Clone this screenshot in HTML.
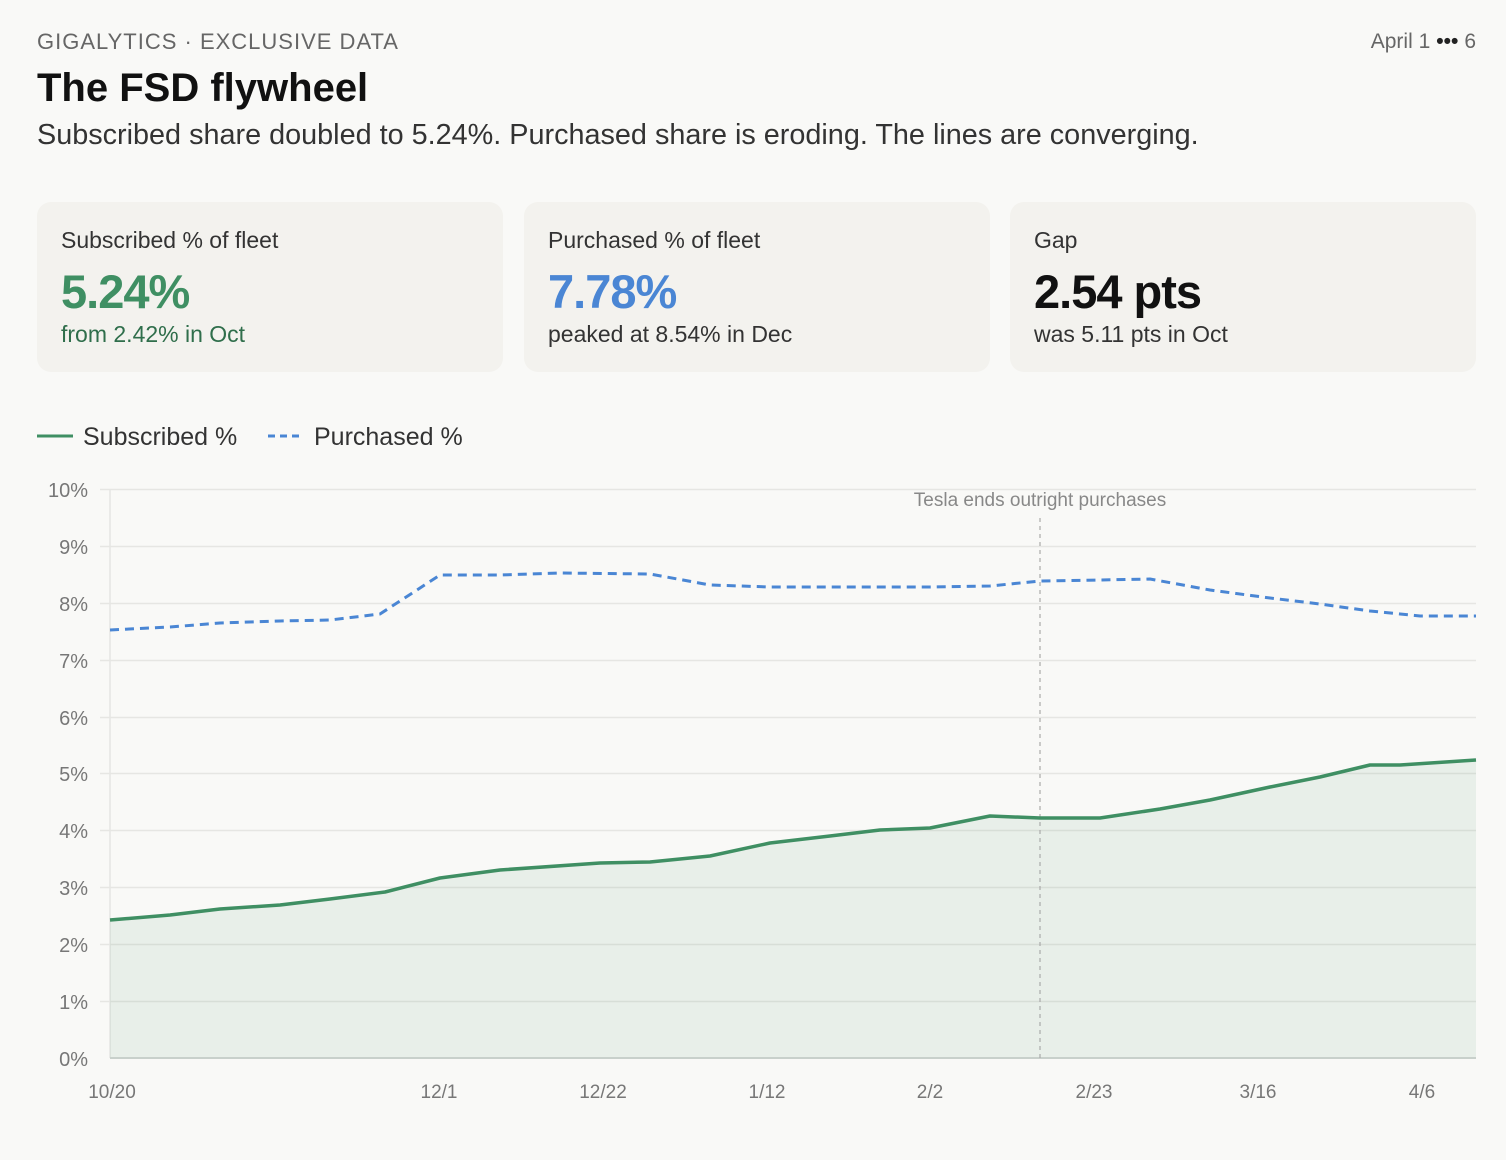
<!DOCTYPE html>
<html><head><meta charset="utf-8"><style>
body{margin:0;width:1506px;height:1160px;background:#f9f9f7;font-family:"Liberation Sans",sans-serif;position:relative;overflow:hidden}
.a{position:absolute;white-space:nowrap}
.card{position:absolute;top:202px;width:466px;height:170px;background:#f3f2ee;border-radius:14px}
.card .l{position:absolute;left:24px;top:25px;font-size:23px;color:#333}
.card .v{position:absolute;left:24px;top:62px;font-size:47px;font-weight:bold;letter-spacing:-1px}
.card .s{position:absolute;left:24px;top:119px;font-size:23px;color:#333}
</style></head><body>
<div class="a" style="left:37px;top:29px;font-size:22px;letter-spacing:1px;color:#666">GIGALYTICS · EXCLUSIVE DATA</div>
<div class="a" style="right:30px;top:30px;font-size:21px;color:#666">April 1<span style="color:#222;font-weight:bold;margin:0 6px">•••</span>6</div>
<div class="a" style="left:37px;top:66px;font-size:40px;font-weight:bold;color:#111">The FSD flywheel</div>
<div class="a" style="left:37px;top:119px;font-size:28.8px;color:#333">Subscribed share doubled to 5.24%. Purchased share is eroding. The lines are converging.</div>
<div class="card" style="left:37px"><div class="l">Subscribed % of fleet</div><div class="v" style="color:#3f8f63">5.24%</div><div class="s" style="color:#2f6e4b">from 2.42% in Oct</div></div>
<div class="card" style="left:524px"><div class="l">Purchased % of fleet</div><div class="v" style="color:#4a86d4">7.78%</div><div class="s">peaked at 8.54% in Dec</div></div>
<div class="card" style="left:1010px"><div class="l">Gap</div><div class="v" style="color:#111">2.54 pts</div><div class="s">was 5.11 pts in Oct</div></div>
<svg class="a" style="left:0;top:0" width="1506" height="1160">
<line x1="37" y1="436" x2="73" y2="436" stroke="#3f8f63" stroke-width="3"/>
<text x="83" y="445" font-size="25" fill="#333" font-family="Liberation Sans">Subscribed %</text>
<line x1="268" y1="436" x2="304" y2="436" stroke="#4a86d4" stroke-width="3" stroke-dasharray="7,5"/>
<text x="314" y="445" font-size="25" fill="#333" font-family="Liberation Sans">Purchased %</text>
<g stroke="#e6e6e3" stroke-width="1.5">
<line x1="100" y1="489.5" x2="1476" y2="489.5"/><line x1="100" y1="546.5" x2="1476" y2="546.5"/><line x1="100" y1="603.5" x2="1476" y2="603.5"/><line x1="100" y1="660.5" x2="1476" y2="660.5"/><line x1="100" y1="717.5" x2="1476" y2="717.5"/><line x1="100" y1="773.5" x2="1476" y2="773.5"/><line x1="100" y1="830.5" x2="1476" y2="830.5"/><line x1="100" y1="887.5" x2="1476" y2="887.5"/><line x1="100" y1="944.5" x2="1476" y2="944.5"/><line x1="100" y1="1001.5" x2="1476" y2="1001.5"/>
<line x1="110" y1="489" x2="110" y2="1058"/>
</g>
<g font-size="20" fill="#777" text-anchor="end" font-family="Liberation Sans">
<text x="88" y="497">10%</text><text x="88" y="554">9%</text><text x="88" y="611">8%</text><text x="88" y="668">7%</text><text x="88" y="725">6%</text><text x="88" y="781">5%</text><text x="88" y="838">4%</text><text x="88" y="895">3%</text><text x="88" y="952">2%</text><text x="88" y="1009">1%</text><text x="88" y="1066">0%</text>
</g>
<g font-size="19" fill="#777" text-anchor="middle" font-family="Liberation Sans">
<text x="112" y="1098">10/20</text><text x="439" y="1098">12/1</text><text x="603" y="1098">12/22</text><text x="767" y="1098">1/12</text><text x="930" y="1098">2/2</text><text x="1094" y="1098">2/23</text><text x="1258" y="1098">3/16</text><text x="1422" y="1098">4/6</text>
</g>
<polygon fill="#3f8f63" fill-opacity="0.09" points="110,1058 110,920 170,915 220,909 280,905 330,899 385,892 440,878 500,870 600,863 650,862 710,856 770,843 830,836 880,830 930,828 990,816 1040,818 1100,818 1160,809 1210,800 1270,787 1320,777 1370,765 1400,765 1476,760 1476,1058"/>
<line x1="110" y1="1058" x2="1476" y2="1058" stroke="#c8d0cb" stroke-width="2"/>
<line x1="1040" y1="518" x2="1040" y2="1058" stroke="#aaa" stroke-width="1.2" stroke-dasharray="4,4"/>
<text x="1040" y="506" font-size="19" fill="#888" text-anchor="middle" font-family="Liberation Sans">Tesla ends outright purchases</text>
<polyline fill="none" stroke="#3f8f63" stroke-width="3.5" stroke-linejoin="round" points="110,920 170,915 220,909 280,905 330,899 385,892 440,878 500,870 600,863 650,862 710,856 770,843 830,836 880,830 930,828 990,816 1040,818 1100,818 1160,809 1210,800 1270,787 1320,777 1370,765 1400,765 1476,760"/>
<polyline fill="none" stroke="#4a86d4" stroke-width="3" stroke-dasharray="9,6" stroke-linejoin="round" points="110,630 170,627 220,623 280,621 330,620 380,614 440,575 500,575 560,573 650,574 710,585 770,587 850,587 930,587 990,586 1040,581 1100,580 1150,579 1210,590 1270,598 1320,604 1370,611 1420,616 1476,616"/>
</svg>
</body></html>
